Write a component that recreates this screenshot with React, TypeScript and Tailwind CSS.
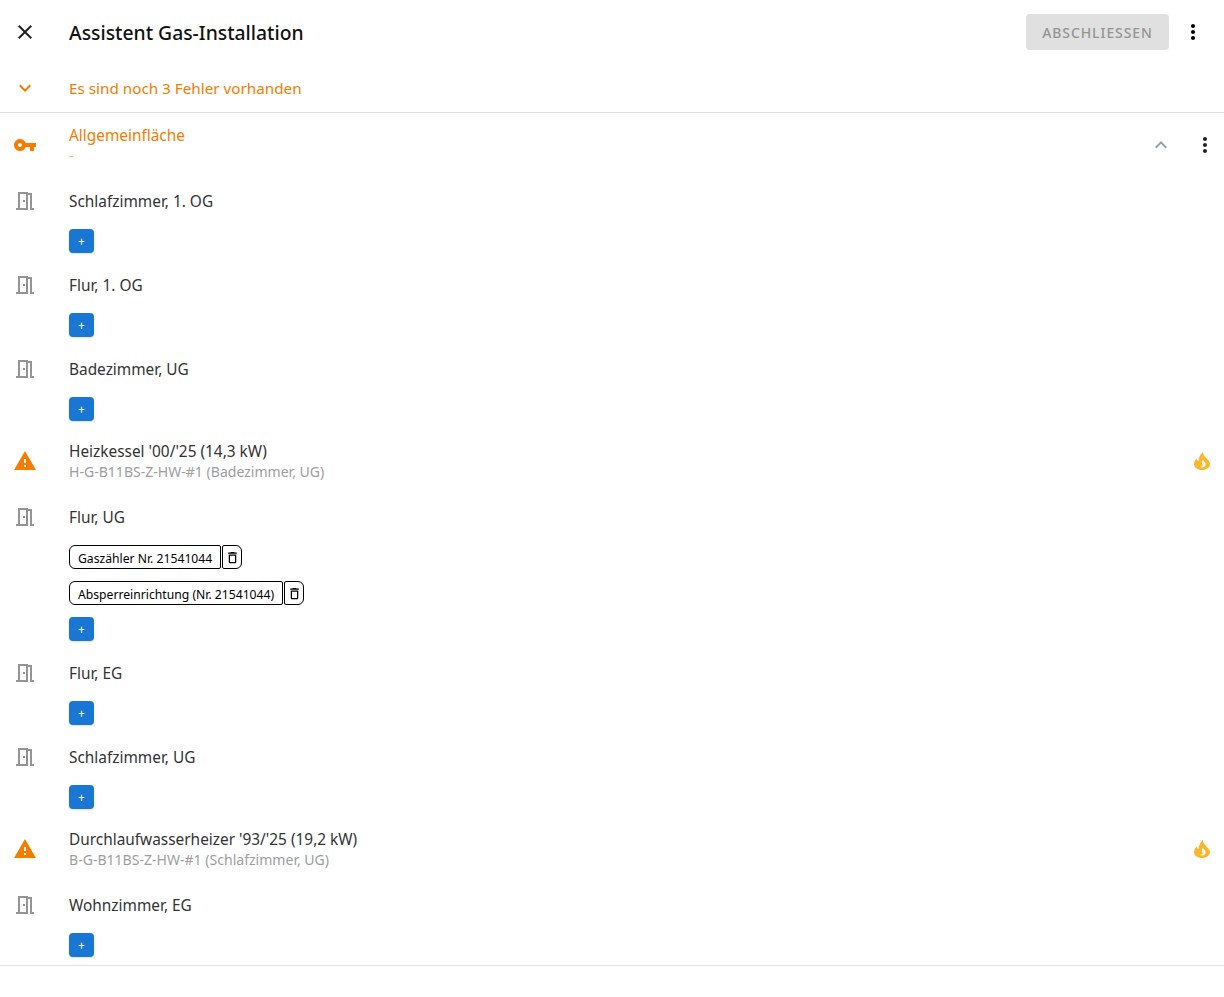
import React from 'react';
import {
    MdClose,
    MdDeleteOutline,
    MdExpandLess,
    MdExpandMore,
    MdMoreVert,
    MdOutlineMeetingRoom,
    MdVpnKey,
    MdWarning,
} from 'react-icons/md';

// flame with the small swirl, none of the icon sets has this exact one
const Flame = () => (
    <svg width="16" height="18" viewBox="0 0 16 18" className="text-[#fbb62d]">
        <path
            fill="currentColor"
            fillRule="evenodd"
            d="M8.8 0C9 3 10.5 4 12.5 6.5 14.5 8.8 16 10 16 12 16 15.5 12.5 18 8 18 3.5 18 0 15.5 0 12 0 9.5 1.2 8 2.5 6.5 3 8 3.5 9 4.5 9 5 6 5.5 3 8.8 0ZM8 15.5C10.5 15.5 12 13.5 11.5 11.5 11 10 9.5 9.5 9 7.5 7.5 9.5 7.5 11 8.5 12.5 9 13.5 8.5 15 6 14.5 6.5 15.2 7.2 15.5 8 15.5Z"
        />
    </svg>
);

const AddButton = () => (
    <button className="w-[25px] h-6 rounded bg-[#1976d2] text-white text-xs leading-[26px] text-center shadow-sm">
        +
    </button>
);

const Chip = ({ label }: { label: string }) => (
    <div className="flex h-6 gap-px text-black">
        <div className="h-6 border border-black rounded-l-md rounded-r-xs bg-white px-2 text-[12.18px] leading-[25px] whitespace-nowrap">
            {label}
        </div>
        <button className="w-5 h-6 border border-black rounded-r-md rounded-l-xs bg-white flex items-center justify-center">
            <MdDeleteOutline size={15} />
        </button>
    </div>
);

const Room = ({ name, chips = [] }: { name: string; chips?: string[] }) => (
    <div>
        <div className="flex items-center h-12">
            <div className="w-[69px] pl-[13px] shrink-0 text-[#949494]">
                <MdOutlineMeetingRoom size={24} />
            </div>
            <span className="text-[#333333] pt-0.5">{name}</span>
        </div>
        <div className="pl-[69px] pt-1 pb-2 flex flex-col gap-3 items-start">
            {chips.map((c) => (
                <Chip key={c} label={c} />
            ))}
            <AddButton />
        </div>
    </div>
);

const Appliance = ({ name, sub }: { name: string; sub: string }) => (
    <div className="flex items-center h-16">
        <div className="w-[69px] pl-[13px] shrink-0 text-[#f57c00]">
            <MdWarning size={24} />
        </div>
        <div className="flex-1 min-w-0">
            <div className="text-[#333333] leading-[22px] pt-px">{name}</div>
            <div className="text-[#9e9e9e] text-[14.05px] leading-[20px] -mt-px">{sub}</div>
        </div>
        <div className="pr-[14px]">
            <Flame />
        </div>
    </div>
);

export default function App() {
    return (
        <div className="min-h-[997px] bg-white font-['Noto_Sans',sans-serif] text-[15.4px]">
            <header className="flex items-center h-16">
                <div className="w-[69px] pl-[13px] shrink-0 text-[#212121]">
                    <MdClose size={24} />
                </div>
                <h1 className="flex-1 text-[19.34px] font-medium text-[#111111] pt-0.5">
                    Assistent Gas-Installation
                </h1>
                <button className="w-[143px] h-9 rounded bg-[#e0e0e0] text-[#949494] text-sm font-medium tracking-[0.92px] pt-0.5">
                    ABSCHLIESSEN
                </button>
                <div className="pl-3 pr-[19px] text-black">
                    <MdMoreVert size={24} />
                </div>
            </header>
            <div className="flex items-center h-12 border-b border-[#e0e0e0] box-content text-[#f57c00]">
                <div className="w-[69px] pl-[13px] shrink-0">
                    <MdExpandMore size={24} />
                </div>
                <span className="text-[15.25px]">Es sind noch 3 Fehler vorhanden</span>
            </div>
            <div className="border-b border-[#e0e0e0]">
                <div className="flex items-center h-16">
                    <div className="w-[69px] pl-[13px] shrink-0 text-[#f57c00]">
                        <MdVpnKey size={24} />
                    </div>
                    <div className="flex-1">
                        <div className="text-[#f57c00] leading-[22px] pt-px">Allgemeinfläche</div>
                        <div className="text-[#f57c00] text-sm leading-[20px] opacity-60 -mt-px">-</div>
                    </div>
                    <div className="pr-5 text-[#90a4ae]">
                        <MdExpandLess size={24} />
                    </div>
                    <div className="pr-[7px] text-[#212121]">
                        <MdMoreVert size={24} />
                    </div>
                </div>
                <Room name="Schlafzimmer, 1. OG" />
                <Room name="Flur, 1. OG" />
                <Room name="Badezimmer, UG" />
                <Appliance name="Heizkessel '00/'25 (14,3 kW)" sub="H-G-B11BS-Z-HW-#1 (Badezimmer, UG)" />
                <Room
                    name="Flur, UG"
                    chips={['Gaszähler Nr. 21541044', 'Absperreinrichtung (Nr. 21541044)']}
                />
                <Room name="Flur, EG" />
                <Room name="Schlafzimmer, UG" />
                <Appliance name="Durchlaufwasserheizer '93/'25 (19,2 kW)" sub="B-G-B11BS-Z-HW-#1 (Schlafzimmer, UG)" />
                <Room name="Wohnzimmer, EG" />
            </div>
        </div>
    );
}
